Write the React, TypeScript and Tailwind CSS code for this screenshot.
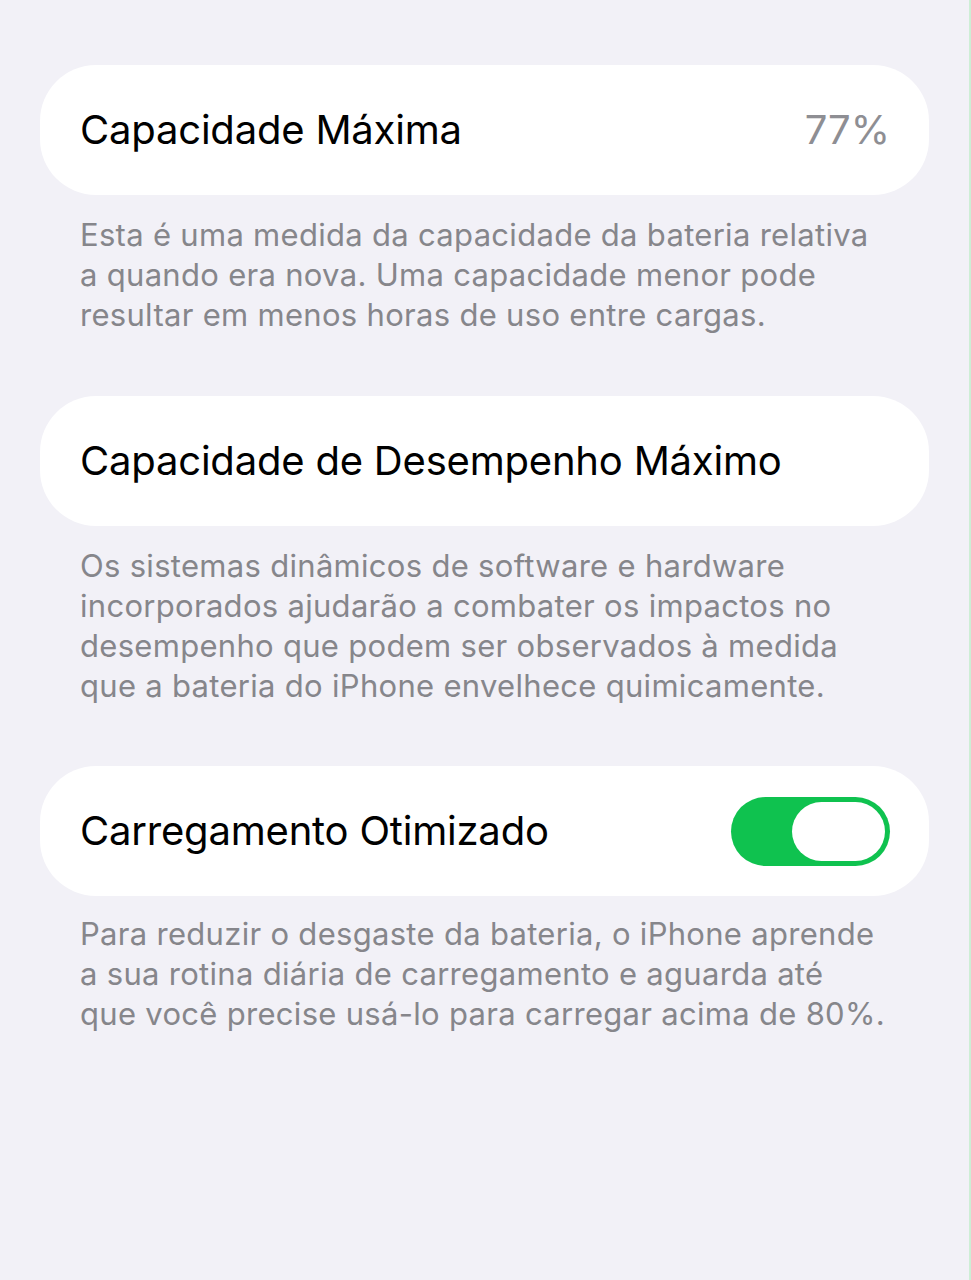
import React, { useState } from 'react';

const font = { fontFamily: 'Inter, "Noto Sans", sans-serif' };

interface RowProps {
  title: string;
  right?: React.ReactNode;
}

const Row: React.FC<RowProps> = ({ title, right }) => (
  <div className="flex h-[130px] items-center justify-between rounded-[56px] bg-white pl-[40px] pr-[39px]">
    <span className="text-[40px] tracking-[-0.2px] text-black">{title}</span>
    {right}
  </div>
);

const Caption: React.FC<{ lines: string[] }> = ({ lines }) => (
  <p className="px-[40px] pt-[20px] text-[31px] leading-[40px] tracking-[0.3px] text-[#86868b]">
    {lines.map((l, i) => (
      <React.Fragment key={i}>
        {l}
        {i < lines.length - 1 && <br />}
      </React.Fragment>
    ))}
  </p>
);

export default function App() {
  const [optimized, setOptimized] = useState(true);

  return (
    <div
      style={font}
      className="min-h-[1280px] border-r-2 border-[#cdeed5] bg-[#f2f1f7] px-[40px] pt-[65px]"
    >
      <Row title="Capacidade Máxima" right={<span className="text-[40px] text-[#8e8e93]">77%</span>} />
      <Caption
        lines={[
          'Esta é uma medida da capacidade da bateria relativa',
          'a quando era nova. Uma capacidade menor pode',
          'resultar em menos horas de uso entre cargas.',
        ]}
      />

      <div className="mt-[61px]">
        <Row title="Capacidade de Desempenho Máximo" />
      </div>
      <Caption
        lines={[
          'Os sistemas dinâmicos de software e hardware',
          'incorporados ajudarão a combater os impactos no',
          'desempenho que podem ser observados à medida',
          'que a bateria do iPhone envelhece quimicamente.',
        ]}
      />

      <div className="mt-[60px]">
        <Row
          title="Carregamento Otimizado"
          right={
            <button
              type="button"
              onClick={() => setOptimized(!optimized)}
              className={`flex h-[69px] w-[159px] items-center rounded-full px-[5px] ${
                optimized ? 'justify-end bg-[#0fc24f]' : 'justify-start bg-[#e5e5ea]'
              }`}
            >
              <span className="block h-[59px] w-[93px] rounded-full bg-white" />
            </button>
          }
        />
      </div>
      <p className="px-[40px] pt-[18px] text-[31px] leading-[40px] tracking-[0.3px] text-[#86868b]">
        Para reduzir o desgaste da bateria, o iPhone aprende
        <br />
        a sua rotina diária de carregamento e aguarda até
        <br />
        que você precise usá-lo para carregar acima de 80%.
      </p>
    </div>
  );
}
